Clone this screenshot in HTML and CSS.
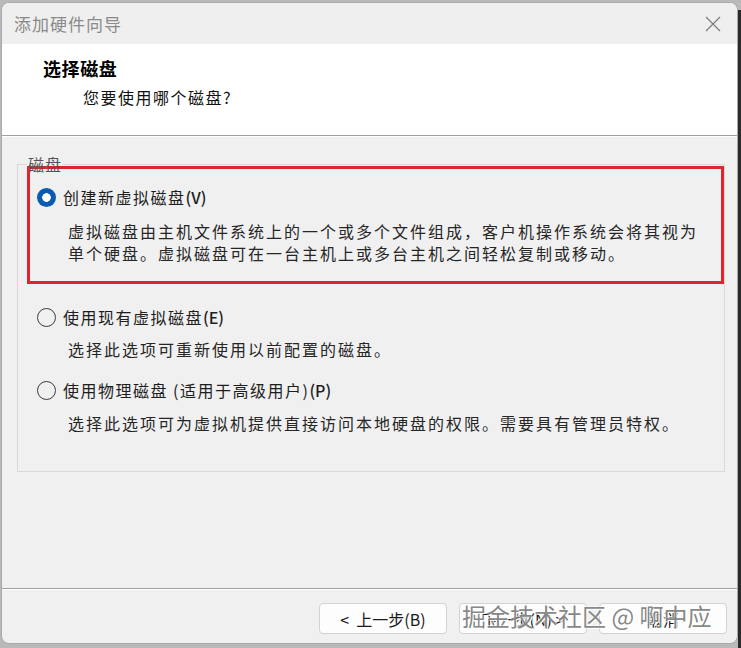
FILE: index.html
```html
<!DOCTYPE html>
<html lang="zh-CN">
<head>
<meta charset="utf-8">
<title>添加硬件向导</title>
<link rel="stylesheet" href="styles.css">
</head>
<body>
<div class="desk">
  <div class="window">
    <div class="titlebar">
      <span class="title">添加硬件向导</span>
      <svg class="close" width="16" height="16" viewBox="0 0 16 16"><path d="M1 1L15 15M15 1L1 15" stroke="#7c7c7c" stroke-width="1.2" fill="none"/></svg>
    </div>
    <div class="header">
      <div class="heading">选择磁盘</div>
      <div class="subheading">您要使用哪个磁盘?</div>
    </div>
    <div class="etched"></div>
    <div class="content">
      <div class="group">
        <div class="legend">磁盘</div>
        <div class="highlight">
          <div class="option-row">
            <span class="radio checked"></span>
            <span class="label">创建新虚拟磁盘<span class="latin">(V)</span></span>
          </div>
          <div class="desc">虚拟磁盘由主机文件系统上的一个或多个文件组成，客户机操作系统会将其视为<br>单个硬盘。虚拟磁盘可在一台主机上或多台主机之间轻松复制或移动。</div>
        </div>
        <div class="option opt2">
          <div class="option-row">
            <span class="radio"></span>
            <span class="label">使用现有虚拟磁盘<span class="latin">(E)</span></span>
          </div>
          <div class="desc">选择此选项可重新使用以前配置的磁盘。</div>
        </div>
        <div class="option opt3">
          <div class="option-row">
            <span class="radio"></span>
            <span class="label">使用物理磁盘 (适用于高级用户)<span class="latin">(P)</span></span>
          </div>
          <div class="desc">选择此选项可为虚拟机提供直接访问本地硬盘的权限。需要具有管理员特权。</div>
        </div>
      </div>
    </div>
    <div class="etched"></div>
    <div class="footer">
      <button class="btn">&lt;&nbsp; 上一步(B)</button>
      <button class="btn">下一步(N) &gt;</button>
      <button class="btn">取消</button>
      <div class="watermark">掘金技术社区 @ 啊中应</div>
    </div>
  </div>
  <div class="edge"></div>
</div>
</body>
</html>
```

FILE: styles.css
```css
html, body {
  margin: 0;
  padding: 0;
}
body {
  width: 741px;
  height: 648px;
  overflow: hidden;
  background: #b9b9b9;
  font-family: "Noto Sans CJK SC", "Noto Sans", sans-serif;
  color: #1e1e1e;
}
.desk {
  display: flex;
  height: 648px;
  padding: 2px 0 0 1px;
  box-sizing: border-box;
}
.window {
  width: 737px;
  height: 642px;
  box-sizing: border-box;
  border: 1px solid #a9a9a9;
  border-radius: 8px;
  background: #f0f0f0;
  display: flex;
  flex-direction: column;
  overflow: hidden;
  position: relative;
}
.edge {
  flex: 1;
  background: #2b2b2b;
  margin-top: 8px;
}
.titlebar {
  height: 41px;
  flex: none;
  display: flex;
  align-items: center;
  justify-content: space-between;
  padding: 0 16px 0 12px;
  background: #efefef;
}
.title {
  font-size: 17px;
  letter-spacing: 1px;
  color: #8a8a8a;
}
.close {
  display: block;
}
.header {
  height: 91px;
  flex: none;
  background: #ffffff;
  box-sizing: border-box;
  padding-top: 12px;
}
.heading {
  padding-left: 41px;
  font-size: 18px;
  font-weight: bold;
  line-height: 24px;
  letter-spacing: 0.6px;
  color: #000;
}
.subheading {
  padding-left: 81px;
  margin-top: 5px;
  font-size: 16px;
  line-height: 24px;
  letter-spacing: 1.5px;
  color: #111;
}
.etched {
  flex: none;
  height: 0;
  border-top: 1px solid #a0a0a0;
  border-bottom: 1px solid #ffffff;
}
.content {
  flex: 1;
  padding-top: 27px;
}
.group {
  margin: 0 12px 0 15px;
  border: 1px solid #d9d9d9;
  padding-bottom: 37px;
}
.legend {
  width: fit-content;
  margin: -10px 0 0 9px;
  padding: 0 1px;
  background: #f0f0f0;
  font-size: 16px;
  line-height: 18px;
  color: #555;
  letter-spacing: 1px;
}
.highlight {
  margin: -7px 0 0 9px;
  border: 3px solid #e0232c;
  padding: 17px 0 17px 7px;
}
.option-row {
  display: flex;
  align-items: center;
  height: 22px;
}
.radio {
  width: 19px;
  height: 19px;
  box-sizing: border-box;
  border-radius: 50%;
  border: 1px solid #3a3a3a;
  margin-right: 7px;
  flex: none;
}
.radio.checked {
  border: none;
  background: radial-gradient(circle, #ffffff 0 4px, #0a5cb0 4.6px);
}
.label {
  font-size: 16px;
  letter-spacing: 1.5px;
  line-height: 22px;
  color: #1e1e1e;
}
.latin {
  letter-spacing: 0;
  font-weight: 500;
}
.desc {
  margin-top: 12px;
  padding-left: 31px;
  font-size: 16px;
  line-height: 22px;
  letter-spacing: 2px;
  color: #262626;
  white-space: nowrap;
}
.option {
  padding-left: 19px;
}
.opt2 {
  margin-top: 22px;
}
.opt3 {
  margin-top: 19px;
}
.option .desc {
  margin-top: 10px;
  padding-left: 31px;
}
.opt3 .desc {
  margin-top: 11px;
}
.footer {
  flex: none;
  height: 53px;
  box-sizing: border-box;
  padding: 13px 10px 9px 0;
  display: flex;
  justify-content: flex-end;
  gap: 12px;
  position: relative;
}
.btn {
  width: 128px;
  height: 31px;
  background: #fdfdfd;
  border: 1px solid #d2d2d2;
  border-radius: 4px;
  font-family: "Noto Sans CJK SC", "Noto Sans", sans-serif;
  font-size: 16px;
  color: #1a1a1a;
  padding: 0;
}
.watermark {
  position: absolute;
  left: 460px;
  top: 11px;
  font-size: 24px;
  line-height: 30px;
  color: rgba(120, 120, 120, 0.9);
  text-shadow: 1px 1px 0 #ffffff, -1px -1px 0 rgba(255,255,255,0.7);
  white-space: nowrap;
}
```
